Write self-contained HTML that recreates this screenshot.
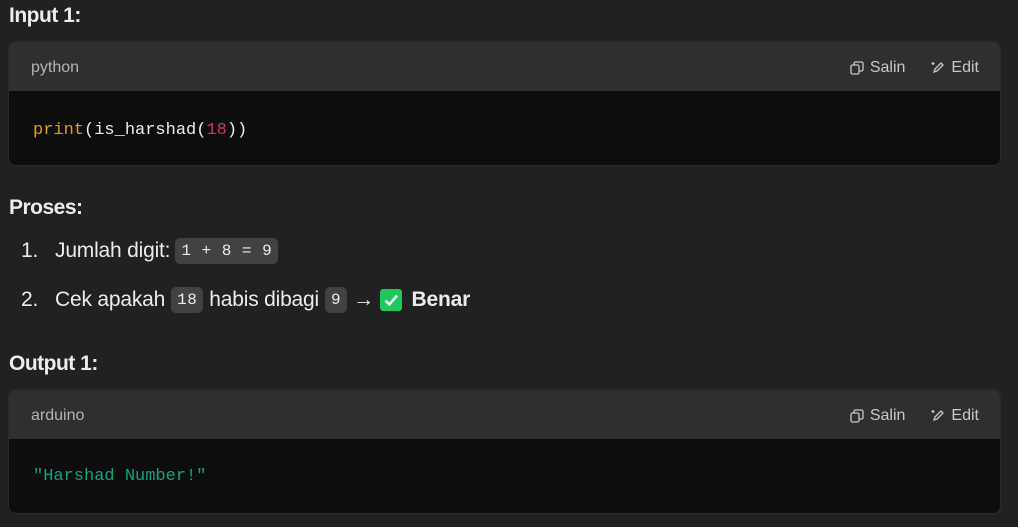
<!DOCTYPE html><html><head><style>
body{margin:0;background:#212121;width:1018px;height:527px;overflow:hidden;font-family:"Liberation Sans",sans-serif;color:#ececec;position:relative}
.h{position:absolute;left:9px;font-weight:bold;font-size:21px;letter-spacing:-0.5px}
.card{position:absolute;left:8px;width:993px;height:125px;border-radius:8px;background:#0d0d0d;overflow:hidden;border:1px solid #2a2a2a;box-sizing:border-box}
.hd{height:49px;background:#2f2f2f;position:relative;font-size:16px;color:#b4b4b4}
.hd .l{position:absolute;left:22px;top:17px}
.hd .r{position:absolute;right:21px;top:17px;color:#c8c8c8;display:flex;align-items:center;gap:6px}
.code{position:absolute;left:24px;font-family:"Liberation Mono",monospace;font-size:17px}
.li{position:absolute;left:21px;font-size:21px;display:flex;align-items:center;letter-spacing:-0.2px}
.c{font-family:"Liberation Mono",monospace;font-size:16px;background:#424242;border-radius:5px;padding:4px 6px;margin:0 6px;letter-spacing:0.5px}
</style></head><body>
<div class="h" style="top:4px">Input 1:</div>
<div class="card" style="top:41px"><div class="hd"><span class="l">python</span><span class="r">
<svg width="14" height="14" viewBox="0 0 14 14" fill="none" stroke="#c8c8c8" stroke-width="1.3"><rect x="1" y="4" width="8" height="9" rx="1.5"/><path d="M4 4V2.5A1.5 1.5 0 0 1 5.5 1h6A1.5 1.5 0 0 1 13 2.5v6A1.5 1.5 0 0 1 11.5 10H9"/></svg>Salin<span style="width:14px"></span>
<svg width="14" height="14" viewBox="0 0 14 14" fill="none" stroke="#c8c8c8" stroke-width="1.3"><path d="M3 11l1-3 6-6 2 2-6 6z"/><path d="M2 1v3M0.5 2.5h3"/></svg>Edit</span></div>
<div class="code" style="top:79px"><span style="color:#e59a1c">print</span>(is_harshad(<span style="color:#d0336a">18</span>))</div></div>
<div class="h" style="top:196px">Proses:</div>
<div class="li" style="top:238px">1.&nbsp;&nbsp; Jumlah digit:<span class="c" style="margin-left:5px">1 + 8 = 9</span></div>
<div class="li" style="top:287px">2.&nbsp;&nbsp; Cek apakah<span class="c">18</span>habis dibagi<span class="c">9</span>→&nbsp;<span style="display:inline-block;width:22px;height:22px;background:#1fc85c;border-radius:3px;position:relative;margin-right:10px"><svg width="22" height="22" viewBox="0 0 20 20"><path d="M5 10.5l3.5 3.5 7-8" stroke="#fff" stroke-width="2.2" fill="none"/></svg></span><b>Benar</b></div>
<div class="h" style="top:352px">Output 1:</div>
<div class="card" style="top:389px"><div class="hd"><span class="l">arduino</span><span class="r">
<svg width="14" height="14" viewBox="0 0 14 14" fill="none" stroke="#c8c8c8" stroke-width="1.3"><rect x="1" y="4" width="8" height="9" rx="1.5"/><path d="M4 4V2.5A1.5 1.5 0 0 1 5.5 1h6A1.5 1.5 0 0 1 13 2.5v6A1.5 1.5 0 0 1 11.5 10H9"/></svg>Salin<span style="width:14px"></span>
<svg width="14" height="14" viewBox="0 0 14 14" fill="none" stroke="#c8c8c8" stroke-width="1.3"><path d="M3 11l1-3 6-6 2 2-6 6z"/><path d="M2 1v3M0.5 2.5h3"/></svg>Edit</span></div>
<div class="code" style="top:77px;color:#11a37f">"Harshad Number!"</div></div>
</body></html>
